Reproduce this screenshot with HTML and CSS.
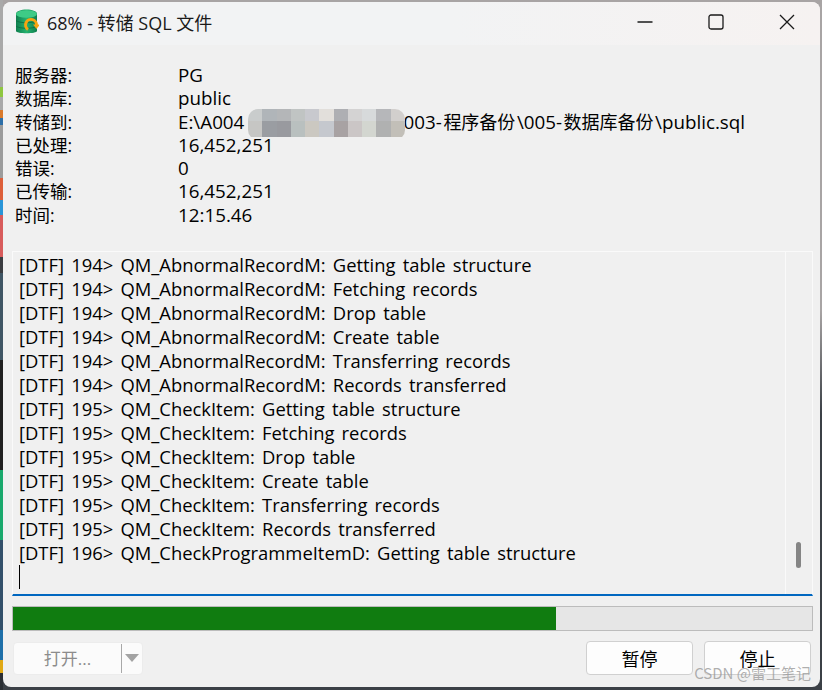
FILE: index.html
```html
<!DOCTYPE html>
<html lang="zh">
<head>
<meta charset="utf-8">
<title>68% - 转储 SQL 文件</title>
<link rel="stylesheet" href="styles.css">
</head>
<body>
<div class="desk">
  <div class="window">
    <header class="titlebar">
      <svg class="app-icon" width="24" height="26" viewBox="0 0 24 26">
        <defs>
          <linearGradient id="g" x1="0" x2="1" y1="0" y2="0"><stop offset="0" stop-color="#0f7f4e"/><stop offset=".5" stop-color="#25b26f"/><stop offset="1" stop-color="#0f7f4e"/></linearGradient>
        </defs>
        <path d="M1 5c0-6 21-6 21 0v17c0 3-21 3-21 0z" fill="url(#g)"/>
        <ellipse cx="11.500" cy="5" rx="10.500" ry="3.800" fill="#3ecb86"/>
        <path d="M1 11.500c3 3 18 3 21 0M1 17c3 3 18 3 21 0" fill="none" stroke="#0b6a40" stroke-width=".8"/>
        <path d="M13 20.500a5.500 5.500 0 1 1 8.500-4" fill="none" stroke="#f5a411" stroke-width="3"/>
        <path d="M18 15.500h7l-3.500 4.500z" fill="#f5a411"/>
      </svg>
      <span class="title">68% - <span class="cjk">转储</span> SQL <span class="cjk">文件</span></span>
      <div class="controls">
        <svg class="ctl" width="16" height="16" viewBox="0 0 16 16"><path d="M0.500 8h15" stroke="#1a1a1a" stroke-width="1.300"/></svg>
        <svg class="ctl" width="16" height="16" viewBox="0 0 16 16"><rect x="1" y="1" width="14" height="14" rx="2" fill="none" stroke="#1a1a1a" stroke-width="1.300"/></svg>
        <svg class="ctl" width="16" height="16" viewBox="0 0 16 16"><path d="M1 1l14 14M15 1L1 15" stroke="#1a1a1a" stroke-width="1.300"/></svg>
      </div>
    </header>
    <main class="content">
      <dl class="info">
        <dt>服务器:</dt><dd>PG</dd>
        <dt>数据库:</dt><dd>public</dd>
        <dt>转储到:</dt><dd>E:\A004 00-000-000-000---003-<span class="cjk">程序备份</span>\005-<span class="cjk">数据库备份</span>\public.sql</dd>
        <dt>已处理:</dt><dd>16,452,251</dd>
        <dt>错误:</dt><dd>0</dd>
        <dt>已传输:</dt><dd>16,452,251</dd>
        <dt>时间:</dt><dd>12:15.46</dd>
      </dl>
      <section class="log">
        <div class="log-text">
          <div>[DTF] 194&gt; QM_AbnormalRecordM: Getting table structure</div>
          <div>[DTF] 194&gt; QM_AbnormalRecordM: Fetching records</div>
          <div>[DTF] 194&gt; QM_AbnormalRecordM: Drop table</div>
          <div>[DTF] 194&gt; QM_AbnormalRecordM: Create table</div>
          <div>[DTF] 194&gt; QM_AbnormalRecordM: Transferring records</div>
          <div>[DTF] 194&gt; QM_AbnormalRecordM: Records transferred</div>
          <div>[DTF] 195&gt; QM_CheckItem: Getting table structure</div>
          <div>[DTF] 195&gt; QM_CheckItem: Fetching records</div>
          <div>[DTF] 195&gt; QM_CheckItem: Drop table</div>
          <div>[DTF] 195&gt; QM_CheckItem: Create table</div>
          <div>[DTF] 195&gt; QM_CheckItem: Transferring records</div>
          <div>[DTF] 195&gt; QM_CheckItem: Records transferred</div>
          <div>[DTF] 196&gt; QM_CheckProgrammeItemD: Getting table structure</div>
          <div class="caret"></div>
        </div>
        <div class="scrollbar"><span class="thumb"></span></div>
      </section>
      <div class="progress"><div class="bar" style="width:68%"></div></div>
      <footer class="buttons">
        <div class="split">
          <span class="split-main">打开...</span>
          <span class="split-arrow"></span>
        </div>
        <div class="spacer"></div>
        <button class="btn">暂停</button>
        <button class="btn">停止</button>
      </footer>
    </main>
    <div class="blur" aria-hidden="true">
      <i class="a1"></i><i class="a2"></i><i class="a3"></i><i class="a4"></i><i class="a5"></i><i class="a6"></i><i class="a7"></i><i class="a8"></i><i class="a9"></i><i class="a10"></i><i class="a11"></i>
      <i class="b1"></i><i class="b2"></i><i class="b3"></i><i class="b4"></i><i class="b5"></i><i class="b6"></i><i class="b7"></i><i class="b8"></i><i class="b9"></i><i class="b10"></i><i class="b11"></i>
    </div>
    <div class="watermark">CSDN @雷工笔记</div>
  </div>
</div>
</body>
</html>
```
FILE: styles.css
```css
* { box-sizing: border-box; }
html, body { margin: 0; height: 100%; }
body {
  font-family: "Open Sans", "Noto Sans CJK SC", sans-serif;
  color: #000;
  background: #3b4046;
  overflow: hidden;
}
.desk {
  width: 822px;
  height: 690px;
  padding: 2px 2px 3px 3px;
  background-color: #3b4046;
  background-repeat: no-repeat;
  background-size: 3px 100%, 100% 100%;
  background-image:
    linear-gradient(to bottom,
      #a9a9a9 0 87px, #8fc640 87px 97px, #a9a9a9 97px 110px, #d9792a 110px 118px, #2e6fa8 118px 125px,
      #9c9c9c 125px 178px, #dd5f3a 178px 200px, #2a95d8 200px 215px, #d85c5c 215px 257px,
      #3a3c40 257px 273px, #3f5564 273px 360px, #1f1f1f 360px 470px, #19a86c 470px 540px,
      #33506a 540px 630px, #1e6fa8 630px 660px, #e0a814 660px 673px, #2a2e33 673px),
    linear-gradient(to bottom, #a8a4a4 0 45%, #3b4046 60%);
}
.window {
  position: relative;
  height: 685px;
  background: #f0f0f0;
  border-radius: 8px;
  overflow: hidden;
}
.titlebar {
  height: 43px;
  background: linear-gradient(to right, #f2f3f4 0 55%, #f6f2f1);
  display: flex;
  align-items: center;
  padding: 0 0 3px 12px;
}
.app-icon { flex: none; }
.title {
  font-size: 18px;
  margin-left: 8px;
  color: #1a1a1a;
}
.title .cjk { font-size: 18px; }
.controls {
  margin-left: auto;
  display: flex;
  gap: 55px;
  padding-right: 25px;
}
.ctl { display: block; }
.content {
  padding: 19px 7px 0 9px;
  display: flex;
  flex-direction: column;
}
.info {
  margin: 0 0 0 3px;
  display: grid;
  grid-template-columns: 163px 1fr;
  grid-auto-rows: 23.250px;
  font-size: 18.800px;
  line-height: 23.250px;
  height: 169px;
}
.info dd { margin: 0; white-space: nowrap; }
.info dt { font-size: 17.500px; }
.info .cjk { font-size: 18px; margin: 0 1.500px; }
.log {
  height: 345px;
  margin-top: 18px;
  display: flex;
  background: #f0f0f0;
  border: 1px solid #fafafa;
  border-bottom: 2px solid #0067c0;
}
.log-text {
  flex: 1;
  padding: 1px 0 0 6px;
  font-size: 18.400px;
  word-spacing: 2.400px;
  line-height: 24px;
  white-space: nowrap;
  overflow: hidden;
}
.caret {
  width: 1px;
  height: 24px;
  background: #000;
}
.scrollbar {
  width: 27px;
  border-left: 1px solid #fafafa;
  position: relative;
}
.thumb {
  position: absolute;
  left: 10px;
  top: 290px;
  width: 5px;
  height: 26px;
  border-radius: 3px;
  background: #858585;
}
.progress {
  height: 25px;
  margin-top: 10px;
  background: #e6e6e6;
  border: 1px solid #bcbcbc;
}
.bar { height: 100%; background: #107c10; }
.buttons {
  margin-top: 10px;
  display: flex;
  align-items: center;
  gap: 11px;
  padding-right: 2px;
}
.spacer { flex: 1; }
.split {
  margin-left: 1px;
  width: 130px;
  height: 33px;
  background: #fbfbfb;
  border: 1px solid #ececec;
  border-radius: 4px;
  display: flex;
  align-items: center;
  color: #8c8c8c;
  font-size: 17px;
}
.split-main {
  width: 108px;
  height: 29px;
  line-height: 29px;
  text-align: center;
  border-right: 1px solid #a8a8a8;
}
.split-arrow {
  margin-left: 3px;
  width: 0;
  height: 0;
  border-left: 7px solid transparent;
  border-right: 7px solid transparent;
  border-top: 8px solid #a3a3a3;
}
.btn {
  width: 107px;
  height: 34px;
  padding: 0;
  background: #fdfdfd;
  border: 1px solid #d0d0d0;
  border-radius: 4px;
  font: inherit;
  font-size: 18px;
  color: #000;
}
.blur {
  position: absolute;
  left: 245px;
  top: 107px;
  width: 157px;
  height: 31px;
  display: grid;
  grid-template-columns: repeat(11, 1fr);
  grid-template-rows: 12px 16px;
  border-radius: 10px;
  overflow: hidden;
}
.a1{background:#c9cccc}.a2{background:#b0b5b9}.a3{background:#b4b6b8}.a4{background:#c0c4c3}.a5{background:#c8c9ce}.a6{background:#e2dfdb}.a7{background:#aeafb3}.a8{background:#d4d3d3}.a9{background:#d7dadb}.a10{background:#b6b7ba}.a11{background:#d2cfcd}
.b1{background:#c6c6c4}.b2{background:#9a9da2}.b3{background:#999a9f}.b4{background:#b9c0bf}.b5{background:#cbc8c1}.b6{background:#c5c8ce}.b7{background:#a8a2a3}.b8{background:#cbc6c6}.b9{background:#d3d6d0}.b10{background:#b0b1b1}.b11{background:#c2bfb8}
.watermark {
  position: absolute;
  right: 9px;
  bottom: 5px;
  font-size: 15px;
  line-height: 18px;
  color: rgba(150,150,150,.75);
  font-family: "Noto Sans CJK SC", sans-serif;
}
```
